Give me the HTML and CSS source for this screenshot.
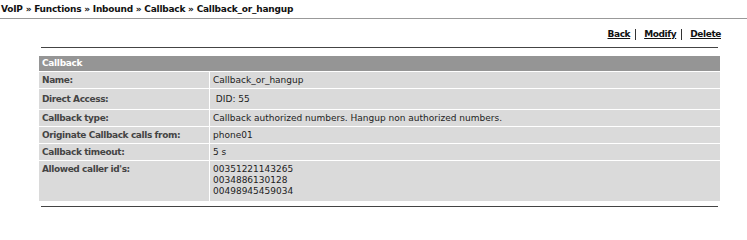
FILE: index.html
```html
<!DOCTYPE html>
<html>
<head>
<meta charset="utf-8">
<link rel="stylesheet" href="styles.css">
</head>
<body>
<div class="crumb">VoIP &raquo; Functions &raquo; Inbound &raquo; Callback &raquo; Callback_or_hangup</div>
<div class="content">
  <div class="actions">
    <a href="#">Back</a><span class="sep"></span><a href="#">Modify</a><span class="sep"></span><a href="#">Delete</a>
  </div>
  <div class="rule"></div>
  <table class="info">
    <tr><th colspan="2" class="head">Callback</th></tr>
    <tr class="r16"><td class="lbl">Name:</td><td class="val">Callback_or_hangup</td></tr>
    <tr class="r20"><td class="lbl">Direct Access:</td><td class="val">&nbsp;DID: 55</td></tr>
    <tr class="r16"><td class="lbl">Callback type:</td><td class="val">Callback authorized numbers. Hangup non authorized numbers.</td></tr>
    <tr class="r16"><td class="lbl">Originate Callback calls from:</td><td class="val">phone01</td></tr>
    <tr class="r16"><td class="lbl">Callback timeout:</td><td class="val">5 s</td></tr>
    <tr class="r38"><td class="lbl top">Allowed caller id's:</td><td class="val top">00351221143265<br>0034886130128<br>00498945459034</td></tr>
  </table>
  <div class="rule rule2"></div>
</div>
</body>
</html>
```
FILE: styles.css
```css
html, body {
  margin: 0;
  padding: 0;
  background: #fff;
  font-family: "DejaVu Sans", Verdana, sans-serif;
  color: #222;
}
.crumb {
  font-size: 9px;
  font-weight: bold;
  letter-spacing: -0.22px;
  color: #111;
  padding: 3px 1px 0 1px;
  height: 15px;
  border-bottom: 1px solid #999;
  box-sizing: content-box;
  line-height: 12px;
}
.content {
  margin: 0 26px 0 38px;
}
.actions {
  font-size: 9px;
  font-weight: bold;
  letter-spacing: -0.4px;
  padding-top: 9px;
  height: 12px;
  line-height: 12px;
  display: flex;
  justify-content: flex-end;
  align-items: center;
}
.actions a {
  color: #111;
  text-decoration: underline;
}
.sep {
  display: inline-block;
  width: 1px;
  height: 11px;
  background: #333;
  margin: 0 8px 0 5px;
}
.rule {
  margin: 7px 3px 0 3px;
  border-top: 1px solid #444;
  height: 0;
}
.rule2 {
  margin-top: 4px;
}
.info {
  margin-top: 7px;
  width: 100%;
  border-collapse: separate;
  border-spacing: 1px;
  font-size: 9px;
}
.info th, .info td {
  padding: 0 3px;
  text-align: left;
  line-height: 11px;
}
.head {
  background: #959595;
  color: #fff;
  font-weight: bold;
  letter-spacing: -0.3px;
  height: 15px;
}
.lbl {
  background: #dadada;
  color: #444;
  font-weight: bold;
  letter-spacing: -0.4px;
  width: 164px;
}
.val {
  background: #dadada;
  color: #222;
}
.r16 td { height: 16px; }
.r20 td { height: 20px; }
.r38 td { height: 37px; }
.top { vertical-align: top; padding-top: 3px !important; }
```
